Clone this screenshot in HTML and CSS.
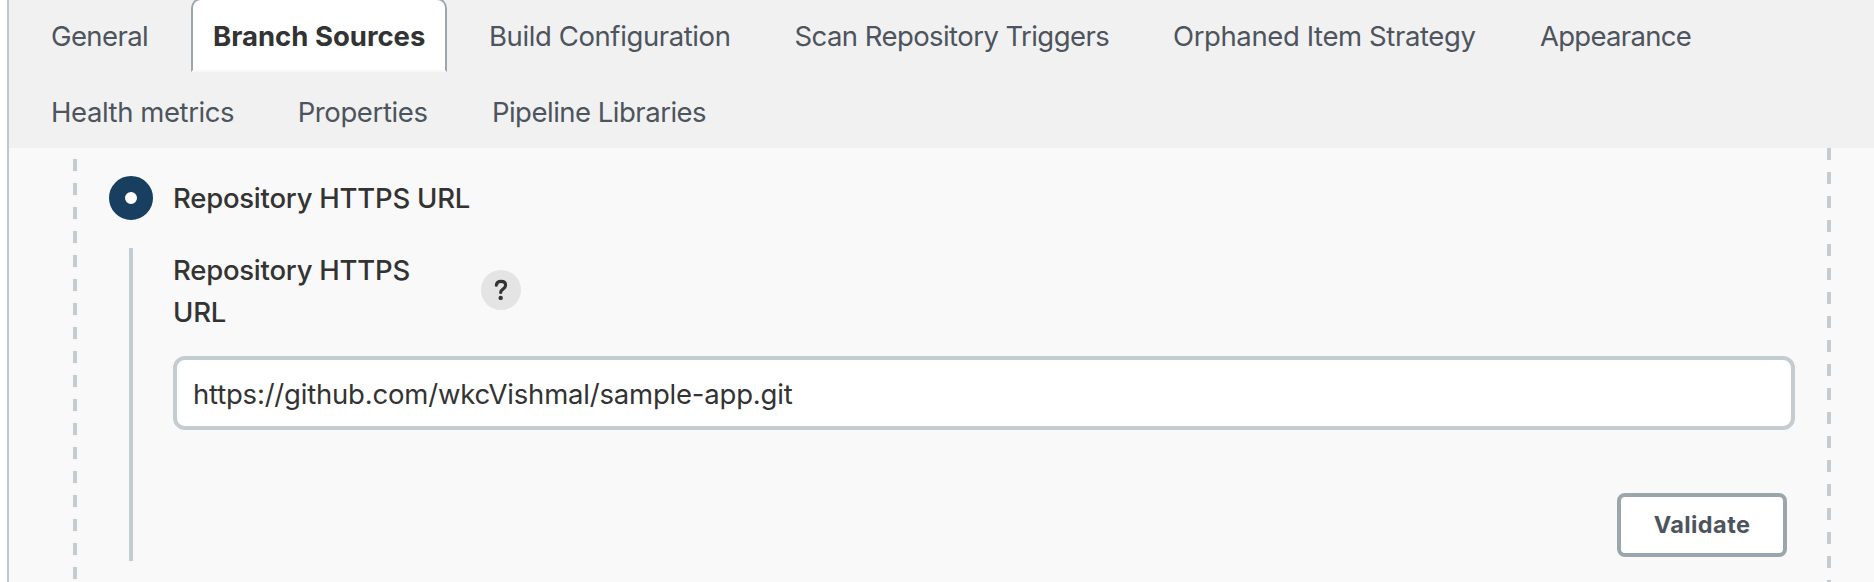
FILE: index.html
```html
<!DOCTYPE html>
<html lang="en">
<head>
<meta charset="utf-8">
<title>Branch Sources</title>
<link rel="stylesheet" href="styles.css">
</head>
<body>
<main class="panel">
  <nav class="tabs">
    <div class="tab-row">
      <a class="tab general">General</a>
      <a class="tab active">Branch Sources</a>
      <a class="tab build">Build Configuration</a>
      <a class="tab scan">Scan Repository Triggers</a>
      <a class="tab orphaned">Orphaned Item Strategy</a>
      <a class="tab appearance">Appearance</a>
    </div>
    <div class="tab-row">
      <a class="tab health">Health metrics</a>
      <a class="tab properties">Properties</a>
      <a class="tab libraries">Pipeline Libraries</a>
    </div>
  </nav>
  <section class="source">
    <div class="dashes dashes-left"></div>
    <form class="form">
      <label class="choice"><span class="radio"></span><span class="label">Repository HTTPS URL</span></label>
      <div class="nested">
        <div class="field-head">
          <span class="label field-label">Repository HTTPS URL</span>
          <span class="help"><svg width="40" height="40" viewBox="0 0 40 40"><path d="M15.3 15.2C15.7 12.7 17.6 11.4 20 11.4C22.7 11.4 24.6 12.8 24.6 15.2C24.6 17.1 23.5 18.1 22 19.1C20.4 20.1 19.7 20.9 19.7 22.4" fill="none" stroke="#333" stroke-width="3.1" stroke-linecap="round" stroke-linejoin="round"/><circle cx="19.7" cy="27.9" r="2.2" fill="#333"/></svg></span>
        </div>
        <input class="url" type="text" value="https://github.com/wkcVishmal/sample-app.git">
        <div class="actions"><button class="validate" type="button">Validate</button></div>
      </div>
    </form>
    <div class="dashes dashes-right"></div>
  </section>
</main>
</body>
</html>
```
FILE: styles.css
```css
* { box-sizing: border-box; }

body {
  margin: 0;
  height: 582px;
  padding-left: 7px;
  overflow: hidden;
  background: #fff;
  color: #333;
  font: 400 27.5px/42px Inter, "Liberation Sans", sans-serif;
}

.panel {
  height: 582px;
  border-left: 2px solid #bfc7ce;
  background: #f9f9f9;
}

.tabs {
  height: 148px;
  padding-left: 20px;
  background: #f1f1f1;
}

.tab-row { display: flex; gap: 20px; height: 72px; }
.tab-row + .tab-row { margin-top: 4px; }

.tab {
  flex: none;
  height: 72px;
  padding: 15px 0 0 22px;
  color: #4d545d;
  white-space: nowrap;
}

.general { width: 142px; letter-spacing: -.6px; }
.build { width: 285.5px; letter-spacing: -.4px; }
.scan { width: 358.5px; letter-spacing: -.57px; }
.orphaned { width: 347px; letter-spacing: -.39px; }
.appearance { width: 195px; letter-spacing: -.72px; }
.health { width: 226.7px; letter-spacing: -.42px; }
.properties { width: 174.2px; letter-spacing: -.4px; }
.libraries { width: 256px; letter-spacing: -.5px; }

.active {
  width: 256px;
  height: 74px;
  margin-top: -2px;
  padding: 15px 0 0 20px;
  border: 2px solid #9ba6ae;
  border-bottom-color: #f8f8f8;
  border-radius: 10px 10px 0 0;
  background: #fff;
  color: #333;
  font-weight: 700;
}

.source {
  display: flex;
  height: 434px;
  padding-left: 64px;
}

.dashes {
  flex: none;
  width: 4px;
  background: repeating-linear-gradient(#c3ccd0 0 12px, transparent 12px 24px);
}
.dashes-left { margin-top: 11.4px; }

.form { width: 1750px; padding: 28px 32px 0; }

.choice { display: flex; align-items: center; gap: 20px; height: 44px; }

.radio {
  width: 44px;
  height: 44px;
  border: 16px solid #193f60;
  border-radius: 50%;
  background: #fff;
}

.label { font-weight: 500; letter-spacing: -.23px; }

.nested {
  height: 313px;
  margin: 28px 0 0 20px;
  padding-left: 40px;
  background: linear-gradient(#c3ccd0, #c3ccd0) 0 0 / 4px 100% no-repeat;
}

.field-head { display: flex; align-items: center; height: 84px; }
.field-label { width: 288px; margin: 2px 0 0 4px; padding-right: 40px; }

.help {
  width: 40px;
  height: 40px;
  margin-left: 20px;
  border-radius: 50%;
  background: #e4e4e4;
}
.help svg { display: block; }

.url {
  display: block;
  width: 1622px;
  height: 74px;
  margin: 24px 0 0 4px;
  padding: 2px 16px 0;
  border: 4px solid #c3ccd0;
  border-radius: 12px;
  outline: 0;
  background: #fff;
  color: #333;
  font: inherit;
  letter-spacing: -.2px;
}

.actions { display: flex; width: 1618px; padding-top: 63px; justify-content: flex-end; }

.validate {
  width: 170px;
  height: 64px;
  padding: 0;
  border: 4px solid #9ba6ac;
  border-radius: 8px;
  background: #fff;
  color: #4d545d;
  font: 700 23.5px/30px Inter, "Liberation Sans", sans-serif;
  letter-spacing: .42px;
}
```
